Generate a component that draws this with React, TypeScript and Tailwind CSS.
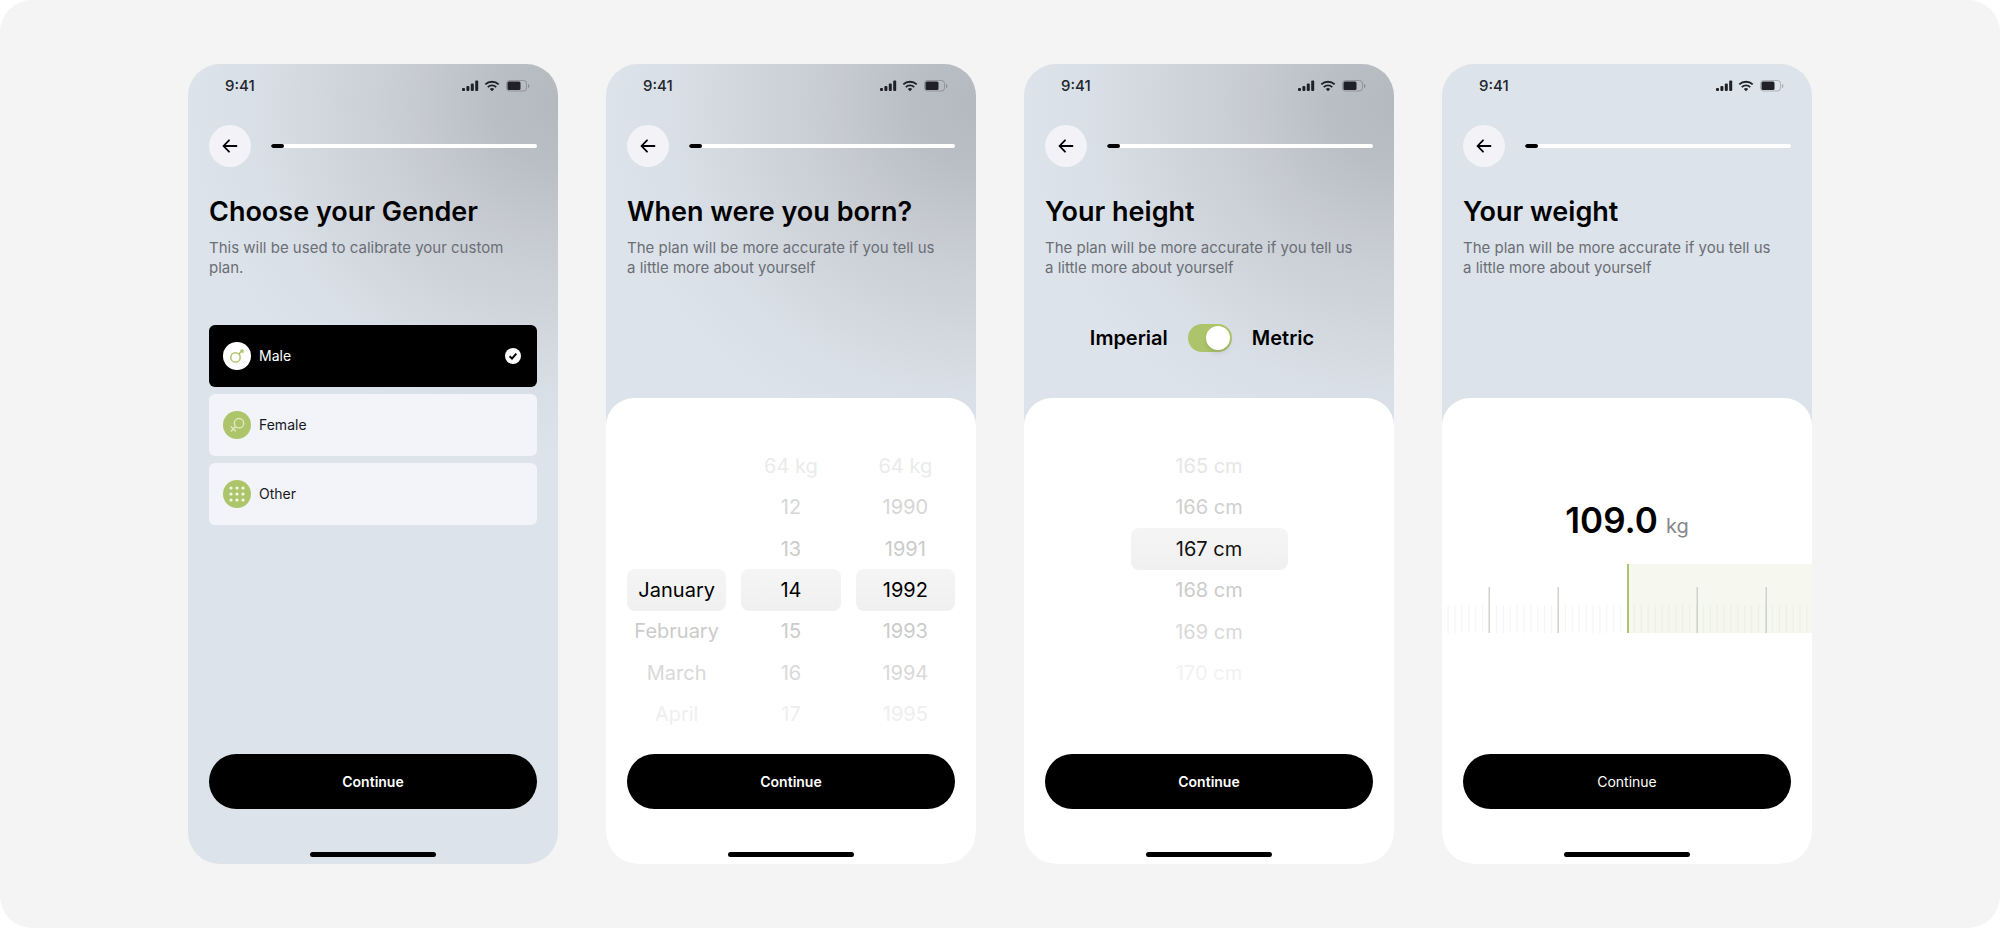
import { useState } from "react";
import type { ReactNode } from "react";

const days = ["64 kg", "12", "13", "14", "15", "16", "17"];
const years = ["64 kg", "1990", "1991", "1992", "1993", "1994", "1995"];
const months = ["", "", "", "January", "February", "March", "April"];
const heights = ["165 cm", "166 cm", "167 cm", "168 cm", "169 cm", "170 cm"];

const planText = "The plan will be more accurate if you tell us a little more about yourself";

// the list fades out towards both ends
const dayTones = [
  "text-[#ebebeb]",
  "text-[#d6d6d6]",
  "text-[#cbcbcb]",
  "text-black",
  "text-[#cbcbcb]",
  "text-[#d9d9d9]",
  "text-[#efefef]",
];
const heightTones = [
  "text-[#e6e6e6]",
  "text-[#cfcfcf]",
  "text-[#111111]",
  "text-[#cbcbcb]",
  "text-[#d9d9d9]",
  "text-[#f2f2f2]",
];

function StatusBar() {
  return (
    <div className="flex h-11 items-center justify-between pr-7 pl-[37px]">
      <span className="text-[15px] leading-5 font-medium text-[#22252b]">9:41</span>
      <svg width="68" height="12" viewBox="0 0 68 12" fill="#1f2126" aria-hidden="true">
        <rect x="0" y="8" width="3" height="3" rx="1" />
        <rect x="4.4" y="6" width="3" height="5" rx="1" />
        <rect x="8.8" y="3.5" width="3" height="7.5" rx="1" />
        <rect x="13.2" y="0.5" width="3" height="10.5" rx="1" />
        <g fill="none" stroke="#1f2126" strokeWidth="1.9">
          <path d="M23.3 4.4a9.8 9.8 0 0 1 13.4 0" />
          <path d="M25.8 7.1a6.1 6.1 0 0 1 8.4 0" />
        </g>
        <path d="M27.8 9a3.2 3.2 0 0 1 4.4 0L30 11.2z" />
        <rect x="44.5" y="0.5" width="20" height="10.5" rx="3" fill="none" stroke="#1f2126" strokeOpacity="0.25" />
        <rect x="45.5" y="1.5" width="13" height="8.5" rx="1.5" />
        <path d="M66 4v4c1-.4 1.4-1.2 1.4-2s-.4-1.6-1.4-2z" fillOpacity="0.3" />
      </svg>
    </div>
  );
}

function Screen({
  title,
  text,
  background,
  children,
}: {
  title: string;
  text: string;
  background: string;
  children: ReactNode;
}) {
  return (
    <section className={`flex min-h-[800px] flex-col overflow-hidden rounded-[32px] ${background}`}>
      <StatusBar />
      <header className="px-[21px] pt-[17px]">
        <div className="flex items-center gap-5">
          <button
            type="button"
            aria-label="Back"
            className="flex size-[42px] shrink-0 items-center justify-center rounded-full bg-[#f2f2f7]"
          >
            <svg width="16" height="14" viewBox="0 0 16 14" fill="none" stroke="black" strokeWidth="1.8" strokeLinecap="round" strokeLinejoin="round">
              <path d="M14.5 7H1.5M7 1.3L1.5 7L7 12.7" />
            </svg>
          </button>
          <div className="h-1 flex-1 overflow-hidden rounded-full bg-white">
            <div className="h-1 w-[13px] rounded-full bg-black" />
          </div>
        </div>
        <h1 className="mt-[27px] text-[27px] leading-9 font-semibold text-black">{title}</h1>
        <p className="mt-2 max-w-[316px] text-[15px] leading-5 text-[#6b6e75]">{text}</p>
      </header>
      {children}
    </section>
  );
}

function Footer({ weight }: { weight: string }) {
  return (
    <footer className="mt-auto flex flex-col items-center px-[21px] pb-[7px]">
      <button type="button" className={`h-[55px] w-full rounded-full bg-black text-sm text-white ${weight}`}>
        Continue
      </button>
      <div className="mt-[43px] h-[5px] w-[126px] rounded-full bg-black" />
    </footer>
  );
}

function Sheet({ className, children }: { className: string; children: ReactNode }) {
  return (
    <div className={`flex flex-1 flex-col rounded-t-[28px] bg-white ${className}`}>{children}</div>
  );
}

function Wheel({
  label,
  items,
  tones,
  selected,
  className,
}: {
  label: string;
  items: string[];
  tones: string[];
  selected: number;
  className: string;
}) {
  return (
    <ul role="listbox" aria-label={label} className={`grid ${className}`}>
      {items.map((item, index) => (
        <li
          key={index}
          role={item ? "option" : "presentation"}
          aria-selected={item ? index === selected : undefined}
          className={`flex items-center justify-center rounded-lg text-xl leading-6 ${tones[index]} ${
            index === selected ? "bg-linear-to-b from-[#f5f5f5] to-[#f0f0f0]" : ""
          }`}
        >
          {item}
        </li>
      ))}
    </ul>
  );
}

function MaleIcon() {
  return (
    <svg width="28" height="28" viewBox="0 0 28 28" aria-hidden="true">
      <circle cx="14" cy="14" r="14" fill="white" />
      <g fill="none" stroke="#adc56a" strokeWidth="1.5" strokeLinecap="round" strokeLinejoin="round">
        <circle cx="12.5" cy="15.4" r="4.7" />
        <path d="M16 11.9L18.5 9.4" />
        <path d="M18 8.3H19.9V10.2Z" fill="#adc56a" />
      </g>
    </svg>
  );
}

function FemaleIcon() {
  return (
    <svg width="28" height="28" viewBox="0 0 28 28" aria-hidden="true">
      <circle cx="14" cy="14" r="14" fill="#adc56a" />
      <g fill="none" stroke="#e0e9c2" strokeWidth="1.4" strokeLinecap="round">
        <circle cx="16" cy="12.2" r="4.7" />
        <path d="M12.6 15.6L8.3 19.9M8.3 15.8L12.4 19.9" />
      </g>
    </svg>
  );
}

function OtherIcon() {
  return (
    <svg width="28" height="28" viewBox="0 0 28 28" fill="#f4f8e6" aria-hidden="true">
      <circle cx="14" cy="14" r="14" fill="#adc56a" />
      {[8, 14, 20].map((y) => [8, 14, 20].map((x) => <circle key={`${x}-${y}`} cx={x} cy={y} r="1.6" />))}
    </svg>
  );
}

const genders = [
  { name: "Male", icon: <MaleIcon /> },
  { name: "Female", icon: <FemaleIcon /> },
  { name: "Other", icon: <OtherIcon /> },
];

function GenderOptions() {
  const [gender, setGender] = useState("Male");

  return (
    <fieldset aria-label="Gender" className="mt-[47px] flex flex-col gap-[7px] px-[21px]">
      {genders.map(({ name, icon }) => (
        <label
          key={name}
          className={`flex h-[62px] items-center gap-2 rounded-md pr-4 pl-3.5 text-sm leading-5 ${
            gender === name ? "bg-black text-white" : "bg-[#f2f4f9] text-[#17191d]"
          }`}
        >
          {icon}
          {name}
          <input
            type="radio"
            name="gender"
            value={name}
            checked={gender === name}
            onChange={() => setGender(name)}
            className="ml-auto size-4 appearance-none"
          />
          {gender === name && (
            <svg width="16" height="16" viewBox="0 0 16 16" aria-hidden="true">
              <circle cx="8" cy="8" r="8" fill="white" />
              <path d="M4.6 8.3L7 10.6L11.3 5.7" fill="none" stroke="black" strokeWidth="2" />
            </svg>
          )}
        </label>
      ))}
    </fieldset>
  );
}

function UnitSwitch() {
  const [metric, setMetric] = useState(true);

  return (
    <div className="mt-[46px] flex h-7 items-center justify-center gap-5 pr-3.5 text-xl leading-6 font-semibold text-black">
      <span>Imperial</span>
      <input
        type="checkbox"
        role="switch"
        aria-label="Use metric units"
        checked={metric}
        onChange={(event) => setMetric(event.target.checked)}
        className="flex h-7 w-11 appearance-none items-center rounded-full bg-[#c9ccd1] px-0.5 before:size-6 before:rounded-full before:bg-white before:shadow-md checked:justify-end checked:bg-[#adc56a]"
      />
      <span>Metric</span>
    </div>
  );
}

function Ruler() {
  const minor = Array.from({ length: 53 }, (_, i) => (i - 26) * 6.9 + 185);
  const major = [47, 116, 255, 324];

  return (
    <svg className="mt-[22px] w-full" viewBox="0 0 370 69" role="img" aria-label="Weight scale">
      <rect x="185" y="0" width="185" height="69" fill="#f6f8f0" />
      {minor.map((x) => (
        <rect key={x} x={x} y="41" width="1" height="28" fill="#adb89a" fillOpacity="0.14" />
      ))}
      {major.map((x) => (
        <rect key={x} x={x - 0.5} y="23" width="1.5" height="46" fill="#cdd3cb" />
      ))}
      <rect x="185" y="0" width="2" height="69" fill="#adc56a" />
    </svg>
  );
}

const shaded =
  "bg-[#dde3ea] bg-[radial-gradient(ellipse_100%_44%_at_100%_5%,#b4b9be_0%,#babfc5_18%,#c7cbd1_38%,#d0d5dc_60%,#d9dfe6_82%,#dde3ea_100%)]";

export default function App() {
  return (
    <div className="bg-white font-['Inter','Liberation_Sans',sans-serif]">
      <main className="flex min-h-screen items-center justify-center rounded-[32px] bg-[#f4f4f4] px-6 py-16">
        <div className="grid w-full max-w-[1624px] gap-12 sm:grid-cols-2 xl:grid-cols-4">
          <Screen title="Choose your Gender" text="This will be used to calibrate your custom plan." background={shaded}>
            <GenderOptions />
            <Footer weight="font-semibold" />
          </Screen>

          <Screen title="When were you born?" text={planText} background={shaded}>
            <Sheet className="mt-[120px]">
              <div className="mt-[47px] mb-[18px] grid grid-cols-3 gap-[15px] px-[21px]">
                <Wheel label="Month" items={months} tones={dayTones} selected={3} className="h-[290px] grid-rows-7" />
                <Wheel label="Day" items={days} tones={dayTones} selected={3} className="h-[290px] grid-rows-7" />
                <Wheel label="Year" items={years} tones={dayTones} selected={3} className="h-[290px] grid-rows-7" />
              </div>
              <Footer weight="font-semibold" />
            </Sheet>
          </Screen>

          <Screen title="Your height" text={planText} background={shaded}>
            <UnitSwitch />
            <Sheet className="mt-[46px]">
              <Wheel
                label="Height"
                items={heights}
                tones={heightTones}
                selected={2}
                className="mx-auto mt-[47px] h-[249px] w-[157px] grid-rows-6"
              />
              <Footer weight="font-semibold" />
            </Sheet>
          </Screen>

          <Screen title="Your weight" text={planText} background="bg-[#dde3ea]">
            <Sheet className="mt-[120px]">
              <p className="mt-[100px] flex items-baseline justify-center gap-2">
                <span className="text-[35px] leading-11 font-semibold text-black">109.0</span>
                <span className="text-xl leading-6 text-[#85878c]">kg</span>
              </p>
              <Ruler />
              <Footer weight="font-normal" />
            </Sheet>
          </Screen>
        </div>
      </main>
    </div>
  );
}
